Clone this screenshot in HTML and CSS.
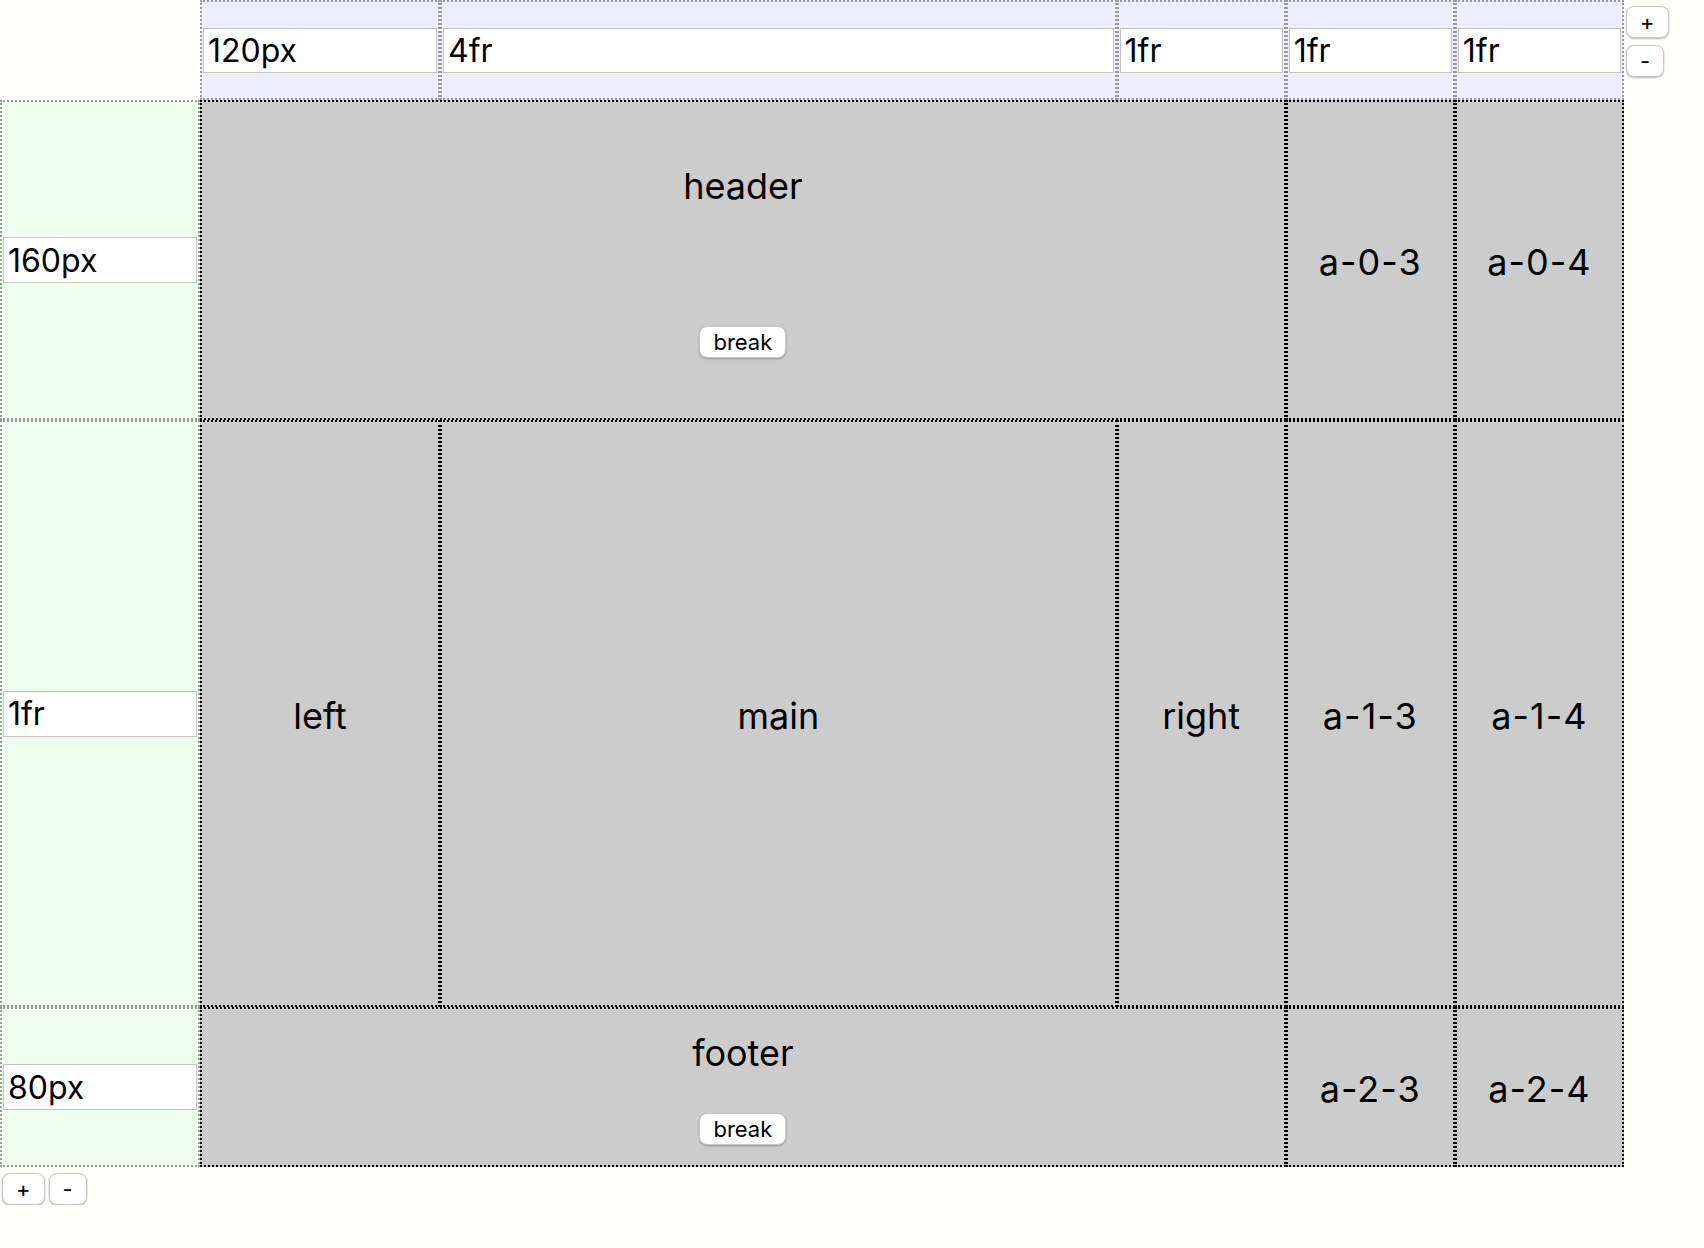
FILE: index.html
```html
<!DOCTYPE html>
<html lang="en">
<head>
<meta charset="utf-8">
<title>Grid editor</title>
<link rel="stylesheet" href="styles.css">
</head>
<body>
<div class="app">
  <div class="corner"></div>
  <div class="col-tracks">
    <div class="track"><input class="track-input" value="120px"></div>
    <div class="track"><input class="track-input" value="4fr"></div>
    <div class="track"><input class="track-input" value="1fr"></div>
    <div class="track"><input class="track-input" value="1fr"></div>
    <div class="track"><input class="track-input" value="1fr"></div>
  </div>
  <div class="col-buttons">
    <button class="btn">+</button>
    <button class="btn">-</button>
  </div>
  <div class="row-tracks">
    <div class="track"><input class="track-input" value="160px"></div>
    <div class="track"><input class="track-input" value="1fr"></div>
    <div class="track"><input class="track-input" value="80px"></div>
  </div>
  <div class="grid">
    <div class="cell area-wide stacked"><div class="label">header</div><button class="btn">break</button></div>
    <div class="cell"><div class="label coord">a-0-3</div></div>
    <div class="cell"><div class="label coord">a-0-4</div></div>
    <div class="cell"><div class="label">left</div></div>
    <div class="cell"><div class="label">main</div></div>
    <div class="cell"><div class="label">right</div></div>
    <div class="cell"><div class="label coord">a-1-3</div></div>
    <div class="cell"><div class="label coord">a-1-4</div></div>
    <div class="cell area-wide stacked"><div class="label">footer</div><button class="btn">break</button></div>
    <div class="cell"><div class="label coord">a-2-3</div></div>
    <div class="cell"><div class="label coord">a-2-4</div></div>
  </div>
  <div class="spacer"></div>
  <div class="row-buttons">
    <button class="btn">+</button>
    <button class="btn">-</button>
  </div>
</div>
</body>
</html>
```
FILE: styles.css
```css
html, body {
  margin: 0;
  padding: 0;
  background: #fffffb;
  font-family: Inter, "Liberation Sans", sans-serif;
  color: #000;
}

.app {
  display: grid;
  grid-template-columns: 200px 1424px auto;
  grid-template-rows: 100px 1067px auto;
}

.col-tracks {
  display: grid;
  grid-template-columns: 240px 4fr 1fr 1fr 1fr;
  background: #eeeeff;
}

.row-tracks {
  display: grid;
  grid-template-rows: 320px 1fr 160px;
  background: #eeffee;
}

.track {
  border: 2px dotted #999;
  display: flex;
  align-items: center;
  padding: 0 1px;
  min-width: 0;
}

.track-input {
  width: 100%;
  min-width: 0;
  box-sizing: border-box;
  height: 45px;
  margin: 0;
  border: 1px solid #c2c2c2;
  background: #fff;
  font-family: Inter, "Liberation Sans", sans-serif;
  font-size: 32px;
  padding: 0 4px;
  color: #000;
  outline: none;
}

.row-tracks .track-input { height: 46px; }

.col-buttons {
  display: flex;
  flex-direction: column;
  align-items: flex-start;
  gap: 7px;
  padding: 6px 0 0 2px;
}

.row-buttons {
  display: flex;
  gap: 4px;
  padding: 6px 0 0 2px;
}

.btn {
  height: 32px;
  margin: 0;
  padding: 0 13px;
  background: #fff;
  border: 1px solid #c6c6c6;
  border-radius: 8px;
  box-shadow: 0 1px 2px rgba(0, 0, 0, 0.28);
  font-family: Inter, "Liberation Sans", sans-serif;
  font-size: 22px;
  line-height: 1;
  color: #000;
}

.grid {
  display: grid;
  grid-template-columns: 240px 4fr 1fr 1fr 1fr;
  grid-template-rows: 320px 1fr 160px;
}

.cell {
  background: #cccccc;
  border: 2px dotted #000;
  display: flex;
  align-items: center;
  justify-content: center;
  min-width: 0;
}

.area-wide { grid-column: 1 / 4; }

.stacked {
  flex-direction: column;
  justify-content: space-around;
}

.label {
  font-size: 36px;
  line-height: 40px;
  padding-top: 4px;
}

.coord { letter-spacing: 1px; }
```
